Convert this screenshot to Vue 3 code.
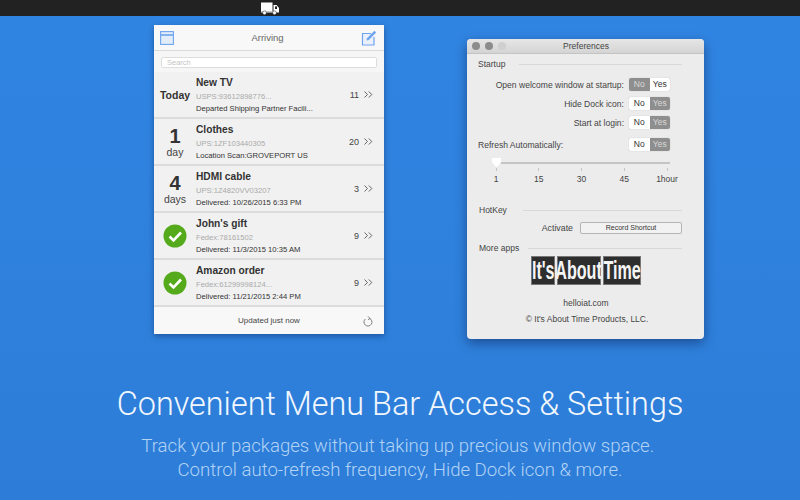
<template>
  <div class="page">
    <div class="menubar">
      <svg class="truck" width="18" height="13" viewBox="0 0 18 13">
        <path d="M0 0.5H11.5V9.5H0Z M12.5 3H15.5L18 6V10H12.5Z" fill="#fff" />
        <rect x="14" y="4.4" width="2" height="2.6" fill="#222" />
        <path d="M0 9.5H18V10.5H0Z" fill="#fff" />
        <circle cx="3.5" cy="10.8" r="1.9" fill="#fff" stroke="#222" stroke-width="0.5" />
        <circle cx="13.5" cy="10.8" r="1.9" fill="#fff" stroke="#222" stroke-width="0.5" />
      </svg>
    </div>

    <div class="windows">
      <!-- Packages popover -->
      <div class="popover">
        <div class="pop-header">
          <svg width="14" height="14" viewBox="0 0 14 14" fill="none" stroke="#6ea4ee" stroke-width="1.1">
            <rect x="0.6" y="0.6" width="12.8" height="12.8" fill="#e3edfa" />
            <path d="M0.6 4H13.4" stroke-width="1.6" />
          </svg>
          <span class="pop-title">Arriving</span>
          <svg width="16" height="16" viewBox="0 0 16 16" fill="none" stroke="#6ea4ee" stroke-width="1.2">
            <path d="M10 3.5H1.5V15H13V7" fill="#eaf1fb" />
            <path d="M5.5 10.5L6 8.2L13.4 0.8L15.2 2.6L7.8 10Z" fill="#6ea4ee" stroke="none" />
          </svg>
        </div>
        <div class="search-row">
          <div class="search">Search</div>
        </div>
        <div class="pkg" v-for="pkg in packages" :key="pkg.name">
          <div class="when">
            <svg v-if="pkg.done" width="24" height="24" viewBox="0 0 24 24">
              <circle cx="12" cy="12" r="11.5" fill="#55aa1c" />
              <path d="M6.5 12.5L10.5 16.5L18 8.5" fill="none" stroke="#fff" stroke-width="2.6" />
            </svg>
            <span v-else-if="pkg.today" class="today">Today</span>
            <template v-else>
              <span class="num">{{ pkg.num }}</span>
              <span class="unit">{{ pkg.unit }}</span>
            </template>
          </div>
          <div class="info">
            <div class="name">{{ pkg.name }}</div>
            <div class="track">{{ pkg.track }}</div>
            <div class="status">{{ pkg.status }}</div>
          </div>
          <span class="count">{{ pkg.count }}</span>
          <svg class="chev" width="9" height="7" viewBox="0 0 9 7" fill="none" stroke="#555" stroke-width="0.9">
            <path d="M0.5 0.5L3.5 3.5L0.5 6.5M4.8 0.5L7.8 3.5L4.8 6.5" />
          </svg>
        </div>
        <div class="pop-footer">
          <span>Updated just now</span>
          <svg class="refresh" width="10" height="11" viewBox="0 0 10 11" fill="none" stroke="#666" stroke-width="0.8">
            <path d="M6.6 2.4A4 4 0 1 1 2.4 3" />
            <path d="M5 0.4L7 2.4L5 3.8" />
          </svg>
        </div>
      </div>

      <!-- Preferences window -->
      <div class="prefs">
        <div class="titlebar">
          <i class="light"></i><i class="light"></i><i class="light off"></i>
          <span>Preferences</span>
        </div>
        <div class="prefs-body">
          <div class="group-label first"><span>Startup</span><hr /></div>
          <div class="opt" v-for="opt in options" :key="opt.label">
            <span>{{ opt.label }}</span>
            <div class="toggle">
              <b :class="{ on: !opt.value }">No</b><b :class="{ on: opt.value }">Yes</b>
            </div>
          </div>
          <div class="opt refresh-opt">
            <span>Refresh Automatically:</span>
            <div class="toggle"><b>No</b><b class="on">Yes</b></div>
          </div>
          <div class="slider">
            <div class="rail"></div>
            <div class="thumb"></div>
            <div class="ticks">
              <span v-for="t in ticks" :key="t"><i></i>{{ t }}</span>
            </div>
          </div>
          <div class="group-label hot"><span>HotKey</span><hr /></div>
          <div class="activate">
            <span>Activate</span>
            <div class="record">Record Shortcut</div>
          </div>
          <div class="group-label more"><span>More apps</span><hr /></div>
          <div class="logo">
            <span class="w1"><em>It's</em></span>
            <span class="w2"><em>About</em></span>
            <span class="w3"><em>Time</em></span>
          </div>
          <div class="site">helloiat.com</div>
          <div class="copy">© It's About Time Products, LLC.</div>
        </div>
      </div>
    </div>

    <h1>Convenient Menu Bar Access &amp; Settings</h1>
    <p>Track your packages without taking up precious window space.&nbsp;<br />Control auto-refresh frequency, Hide Dock icon &amp; more.</p>
  </div>
</template>

<script setup>
const packages = [
  { today: true, name: 'New TV', track: 'USPS:93612898776...', status: 'Departed Shipping Partner Facili...', count: 11 },
  { num: 1, unit: 'day', name: 'Clothes', track: 'UPS:1ZF103440305', status: 'Location Scan:GROVEPORT US', count: 20 },
  { num: 4, unit: 'days', name: 'HDMI cable', track: 'UPS:1Z4820VV03207', status: 'Delivered: 10/26/2015 6:33 PM', count: 3 },
  { done: true, name: "John's gift", track: 'Fedex:78161502', status: 'Delivered: 11/3/2015 10:35 AM', count: 9 },
  { done: true, name: 'Amazon order', track: 'Fedex:61299998124...', status: 'Delivered: 11/21/2015 2:44 PM', count: 9 }
]

const options = [
  { label: 'Open welcome window at startup:', value: false },
  { label: 'Hide Dock icon:', value: true },
  { label: 'Start at login:', value: true }
]

const ticks = ['1', '15', '30', '45', '1hour']
</script>

<style>
html, body {
  margin: 0;
}
</style>

<style scoped>
.page {
  width: 800px;
  height: 500px;
  overflow: hidden;
  background: linear-gradient(180deg, #3085e2 0%, #2d7dd8 100%);
  font-family: "Liberation Sans", Arial, sans-serif;
  color: #333;
}

.menubar {
  height: 16px;
  background: #222;
  padding-left: 261px;
  display: flex;
  align-items: center;
}

.windows {
  display: flex;
  align-items: flex-start;
  gap: 83px;
  padding: 9px 0 0 154px;
}

/* Popover */
.popover {
  width: 230px;
  background: #f4f4f4;
  box-shadow: 0 2px 6px rgba(0, 0, 40, 0.35);
}

.pop-header {
  height: 25px;
  padding: 0 7px 0 6px;
  display: flex;
  align-items: center;
  justify-content: space-between;
  background: #f8f8f8;
  border-bottom: 1px solid #d9d9d9;
}

.pop-title {
  font-size: 9.5px;
  color: #666;
}

.search-row {
  height: 21px;
  padding: 6px 7px 0;
  box-sizing: border-box;
  background: #f6f6f6;
}

.search {
  height: 11px;
  box-sizing: border-box;
  background: #fff;
  border: 1px solid #ddd;
  border-radius: 2px;
  padding-left: 5px;
  font-size: 7.5px;
  line-height: 10px;
  color: #c4c4c4;
}

.pkg {
  height: 47px;
  box-sizing: border-box;
  display: flex;
  align-items: center;
  background: #f1f1f1;
  border-bottom: 2px solid #dcdcdc;
}

.when {
  width: 42px;
  display: flex;
  flex-direction: column;
  align-items: center;
  flex-shrink: 0;
  box-sizing: border-box;
}

.today {
  font-size: 10.5px;
  font-weight: 700;
  color: #333;
}

.num {
  font-size: 20px;
  font-weight: 700;
  line-height: 19px;
  padding-top: 3px;
  color: #333;
}

.unit {
  font-size: 10.5px;
  line-height: 13px;
  color: #444;
}

.info {
  flex: 1;
  min-width: 0;
}

.name {
  font-size: 10.2px;
  font-weight: 700;
  line-height: 13px;
  color: #333;
}

.track {
  font-size: 7.6px;
  line-height: 11px;
  margin-top: 2px;
  color: #aaa;
}

.status {
  font-size: 7.65px;
  line-height: 11px;
  margin-top: 1px;
  color: #333;
}

.count {
  font-size: 9px;
  color: #444;
}

.chev {
  margin: 0 11px 0 5px;
}

.pop-footer {
  height: 27px;
  position: relative;
  display: flex;
  align-items: center;
  justify-content: center;
  font-size: 8px;
  color: #444;
  background: #f8f8f8;
}

.refresh {
  position: absolute;
  right: 11px;
  top: 9px;
}

/* Preferences */
.prefs {
  width: 237px;
  height: 300px;
  margin-top: 14px;
  background: #ececec;
  border-radius: 4px;
  box-shadow: 0 4px 12px rgba(0, 0, 40, 0.4);
  overflow: hidden;
}

.titlebar {
  height: 14px;
  position: relative;
  display: flex;
  align-items: center;
  gap: 5px;
  padding-left: 5px;
  background: linear-gradient(180deg, #e6e6e6, #d4d4d4);
  border-bottom: 1px solid #c4c4c4;
}

.titlebar span {
  position: absolute;
  left: 1px;
  right: 0;
  text-align: center;
  font-size: 8.5px;
  color: #444;
}

.light {
  width: 8px;
  height: 8px;
  border-radius: 50%;
  background: #8c8c8c;
}

.light.off {
  background: #cfcfcf;
}

.prefs-body {
  padding: 0 22px 0 11px;
  font-size: 8.5px;
  color: #444;
}

.group-label {
  display: flex;
  align-items: center;
  gap: 9px;
}

.group-label hr {
  flex: 1;
  margin: 0;
  border: none;
  border-top: 1px solid #d8d8d8;
}

.group-label.first {
  padding-top: 5px;
  margin-bottom: 9px;
}

.group-label.first hr {
  margin-left: 5px;
}

.opt {
  height: 13px;
  margin-bottom: 6px;
  padding-right: 12px;
  display: flex;
  align-items: center;
  justify-content: flex-end;
  gap: 5px;
  font-size: 8.55px;
}

.refresh-opt {
  justify-content: space-between;
  margin-top: 9px;
}

.toggle {
  display: flex;
  width: 41px;
  height: 13px;
  border-radius: 2px;
  overflow: hidden;
  background: #fff;
  box-shadow: 0 0 1px rgba(0, 0, 0, 0.3);
}

.toggle b {
  flex: 1;
  font-weight: 400;
  font-size: 8.5px;
  line-height: 13px;
  text-align: center;
  color: #333;
}

.toggle b.on {
  background: #8e8e8e;
  color: #d8d8d8;
}

.slider {
  position: relative;
  padding-top: 5px;
  margin-top: 1px;
}

.rail {
  height: 2px;
  margin-left: 14px;
  width: 178px;
  background: #c4c4c4;
}

.thumb {
  position: absolute;
  left: 14px;
  top: 1px;
  width: 9px;
  height: 9px;
  background: #fff;
  clip-path: polygon(0 0, 100% 0, 100% 55%, 50% 100%, 0 55%);
}

.ticks {
  display: flex;
  justify-content: space-between;
  margin: 4px 0 0 5px;
  width: 197px;
  font-size: 8.5px;
}

.ticks span {
  display: flex;
  flex-direction: column;
  align-items: center;
  width: 26px;
}

.ticks i {
  width: 1px;
  height: 3px;
  margin-bottom: 3px;
  background: #c4c4c4;
}

.group-label.hot {
  margin-top: 21px;
  padding-left: 1px;
}

.group-label.hot hr {
  margin-left: 7px;
}

.activate {
  display: flex;
  justify-content: flex-end;
  align-items: center;
  gap: 7px;
  margin: 7px 0 0;
  font-size: 8.8px;
}

.record {
  width: 100px;
  height: 10px;
  border: 1px solid #b4b4b4;
  border-radius: 2px;
  background: #f2f2f2;
  font-size: 7px;
  line-height: 10px;
  text-align: center;
  color: #333;
}

.group-label.more {
  margin-top: 9px;
  padding-left: 1px;
}

.logo {
  display: flex;
  justify-content: center;
  gap: 2px;
  margin: 3px 0 0 12px;
}

.logo span {
  height: 29px;
  background: #2e2e2e;
  box-shadow: inset 0 0 0 1px #777;
  color: #f5f5f5;
  display: flex;
  align-items: center;
  justify-content: center;
  overflow: hidden;
}

.logo em {
  font-style: normal;
  font-weight: 700;
  font-family: "Liberation Sans Narrow", "Liberation Sans", sans-serif;
  font-size: 26px;
  transform: scaleX(0.62);
  white-space: nowrap;
}

.w1 { width: 24px; }
.w2 { width: 44px; }
.w3 { width: 38px; }

.site {
  margin: 13px 0 0 12px;
  text-align: center;
  font-size: 8.5px;
}

.copy {
  margin: 6px 0 0 14px;
  text-align: center;
  font-size: 8.5px;
  white-space: nowrap;
}

/* Marketing copy */
h1 {
  margin: 43px 0 0;
  text-align: center;
  font-size: 32.4px;
  line-height: 44px;
  font-weight: 300;
  font-family: Roboto, "Liberation Sans", sans-serif;
  color: #f2f7fd;
}

p {
  margin: 8px 0 0;
  text-align: center;
  font-size: 18.6px;
  line-height: 24px;
  font-weight: 300;
  font-family: Roboto, "Liberation Sans", sans-serif;
  color: #b3d3f5;
}
</style>
